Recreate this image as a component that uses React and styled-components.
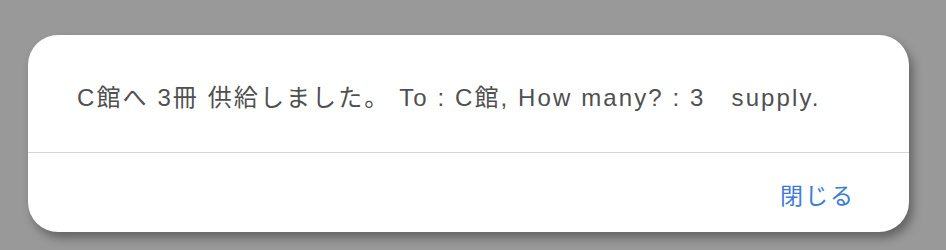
import React from "react";
import styled, { createGlobalStyle } from "styled-components";

const GlobalStyle = createGlobalStyle`
  html, body {
    margin: 0;
    padding: 0;
    background: #999999;
  }
  body {
    font-family: "Liberation Sans", "Noto Sans CJK JP", sans-serif;
  }
`;

const Overlay = styled.div`
  width: 946px;
  height: 250px;
  box-sizing: border-box;
  padding: 35px 37px 0 28px;
  background: #999999;
`;

const Dialog = styled.div`
  width: 881px;
  height: 197px;
  background: #ffffff;
  border-radius: 30px;
  box-shadow: 4px 6px 10px rgba(0, 0, 0, 0.35);
  display: flex;
  flex-direction: column;
  overflow: hidden;
`;

const Body = styled.div`
  height: 118px;
  box-sizing: border-box;
  padding: 49px 0 0 49px;
  border-bottom: 1px solid #d6d6d6;
`;

const Message = styled.p`
  margin: 0;
  font-size: 24px;
  line-height: 28px;
  letter-spacing: 2.1px;
  color: #505050;
  white-space: pre;
`;

const Footer = styled.div`
  flex: 1;
  display: flex;
  justify-content: flex-end;
  align-items: center;
  padding-right: 54px;
`;

const CloseButton = styled.button`
  background: transparent;
  border: 0;
  padding: 0;
  font-family: "Noto Sans CJK JP", sans-serif;
  font-size: 23px;
  letter-spacing: 2px;
  color: #3a7bdc;
  cursor: pointer;
  margin-top: 2px;
`;

export default function App() {
  return (
    <>
      <GlobalStyle />
      <Overlay>
        <Dialog>
          <Body>
            <Message>C館へ 3冊 供給しました。 To : C館, How many? : 3　supply.</Message>
          </Body>
          <Footer>
            <CloseButton>閉じる</CloseButton>
          </Footer>
        </Dialog>
      </Overlay>
    </>
  );
}
